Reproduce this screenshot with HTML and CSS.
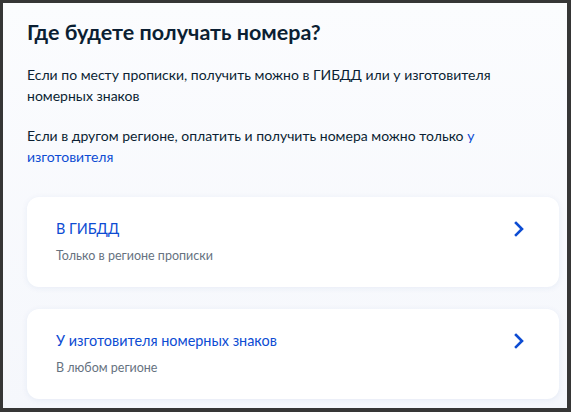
FILE: index.html
```html
<!DOCTYPE html>
<html lang="ru">
<head>
    <meta charset="UTF-8">
    <meta name="viewport" content="width=device-width, initial-scale=1.0">
    <title>Где будете получать номера?</title>
    <link rel="stylesheet" href="styles.css">
</head>
<body>
    <div class="panel">
        <h2>Где будете получать номера?</h2>
        <p class="lead">Если по месту прописки, получить можно в ГИБДД или у изготовителя номерных знаков</p>
        <p class="lead">Если в другом регионе, оплатить и получить номера можно только <a href="#">у изготовителя</a></p>

        <div class="options">
            <a class="option" href="#">
                <div class="option-text">
                    <div class="option-title">В ГИБДД</div>
                    <div class="option-note">Только в регионе прописки</div>
                </div>
                <svg class="chevron" width="10" height="16" viewBox="0 0 10 16">
                    <path d="M2 2l6 6-6 6" fill="none" stroke="#0d4cd3" stroke-width="2.6" stroke-linecap="square" stroke-linejoin="miter"/>
                </svg>
            </a>
            <a class="option" href="#">
                <div class="option-text">
                    <div class="option-title">У изготовителя номерных знаков</div>
                    <div class="option-note">В любом регионе</div>
                </div>
                <svg class="chevron" width="10" height="16" viewBox="0 0 10 16">
                    <path d="M2 2l6 6-6 6" fill="none" stroke="#0d4cd3" stroke-width="2.6" stroke-linecap="square" stroke-linejoin="miter"/>
                </svg>
            </a>
        </div>
    </div>
</body>
</html>
```

FILE: styles.css
```css
html, body {
    height: 100%;
}
body {
    margin: 0;
    padding: 3px 4px 4px 3px;
    box-sizing: border-box;
    background: #363636;
    font-family: Lato, "Noto Sans", sans-serif;
    color: #0b1f33;
}
.panel {
    height: 100%;
    box-sizing: border-box;
    background: linear-gradient(#fbfcfe, #f5f7fc);
    padding: 15px 8px 0 24px;
    overflow: hidden;
}
h2 {
    margin: 0 0 18px;
    font-size: 21.5px;
    line-height: 28px;
    font-weight: 700;
}
.lead {
    margin: 0 0 19px;
    font-size: 14px;
    line-height: 21px;
}
.lead a {
    color: #0d4cd3;
    text-decoration: none;
}
.options {
    display: flex;
    flex-direction: column;
    gap: 22px;
    margin-top: 30px;
}
.option {
    display: flex;
    align-items: flex-start;
    justify-content: space-between;
    background: #fff;
    border-radius: 12px;
    box-shadow: 0 1px 6px rgba(30, 70, 160, 0.07);
    padding: 20px 35px 21px 29px;
    text-decoration: none;
}
.option-title {
    color: #0d4cd3;
    font-size: 14.4px;
    line-height: 24px;
}
.option-note {
    margin-top: 5px;
    color: #66727f;
    font-size: 12.5px;
    line-height: 20px;
}
.chevron {
    margin-top: 4px;
}
```
